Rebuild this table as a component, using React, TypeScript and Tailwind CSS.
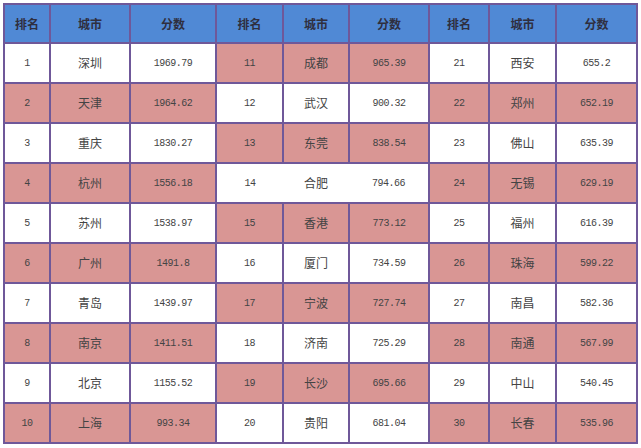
const rows: [string, string, string][][] = [
  [["1", "深圳", "1969.79"], ["11", "成都", "965.39"], ["21", "西安", "655.2"]],
  [["2", "天津", "1964.62"], ["12", "武汉", "900.32"], ["22", "郑州", "652.19"]],
  [["3", "重庆", "1830.27"], ["13", "东莞", "838.54"], ["23", "佛山", "635.39"]],
  [["4", "杭州", "1556.18"], ["14", "合肥", "794.66"], ["24", "无锡", "629.19"]],
  [["5", "苏州", "1538.97"], ["15", "香港", "773.12"], ["25", "福州", "616.39"]],
  [["6", "广州", "1491.8"], ["16", "厦门", "734.59"], ["26", "珠海", "599.22"]],
  [["7", "青岛", "1439.97"], ["17", "宁波", "727.74"], ["27", "南昌", "582.36"]],
  [["8", "南京", "1411.51"], ["18", "济南", "725.29"], ["28", "南通", "567.99"]],
  [["9", "北京", "1155.52"], ["19", "长沙", "695.66"], ["29", "中山", "540.45"]],
  [["10", "上海", "993.34"], ["20", "贵阳", "681.04"], ["30", "长春", "535.96"]],
];

const widths = [46, 80, 86, 67, 66, 80, 60, 67, 81];
const headers = ["排名", "城市", "分数"];

const cell = "border-2 border-[#6f5899] text-center align-middle p-0";
const num = "font-['Liberation_Mono',monospace] text-[10px] tracking-[-0.5px] text-[#444]";
const city = "font-['Noto_Sans_CJK_SC',sans-serif] text-[12px] text-[#444]";

export default function App() {
  return (
    <div className="bg-white w-[641px] h-[448px] pt-[3px] pl-[3px]">
      <table className="border-collapse table-fixed w-[635px]">
        <colgroup>
          {widths.map((w, i) => (
            <col key={i} style={{ width: w }} />
          ))}
        </colgroup>
        <thead>
          <tr className="h-[39px] bg-[#5089d5]">
            {[0, 1, 2].flatMap((g) =>
              headers.map((h) => (
                <th
                  key={g + h}
                  className={`${cell} font-['Noto_Sans_CJK_SC',sans-serif] text-[12px] font-bold text-[#2f2f3f]`}
                >
                  {h}
                </th>
              ))
            )}
          </tr>
        </thead>
        <tbody>
          {rows.map((groups, r) => (
            <tr key={r} className="h-[40px]">
              {groups.map((g, gi) => {
                const pink = gi === 1 ? r % 2 === 0 : r % 2 === 1;
                const bg = pink ? "bg-[#d99694]" : "bg-white";
                const merged = r === 3 && gi === 1;
                return [
                  <td key={gi + "a"} className={`${cell} ${bg} ${num} ${merged ? "border-r-0" : ""}`}>
                    {g[0]}
                  </td>,
                  <td key={gi + "b"} className={`${cell} ${bg} ${city} ${merged ? "border-x-0" : ""}`}>
                    {g[1]}
                  </td>,
                  <td key={gi + "c"} className={`${cell} ${bg} ${num} ${merged ? "border-l-0" : ""}`}>
                    {g[2]}
                  </td>,
                ];
              })}
            </tr>
          ))}
        </tbody>
      </table>
    </div>
  );
}
